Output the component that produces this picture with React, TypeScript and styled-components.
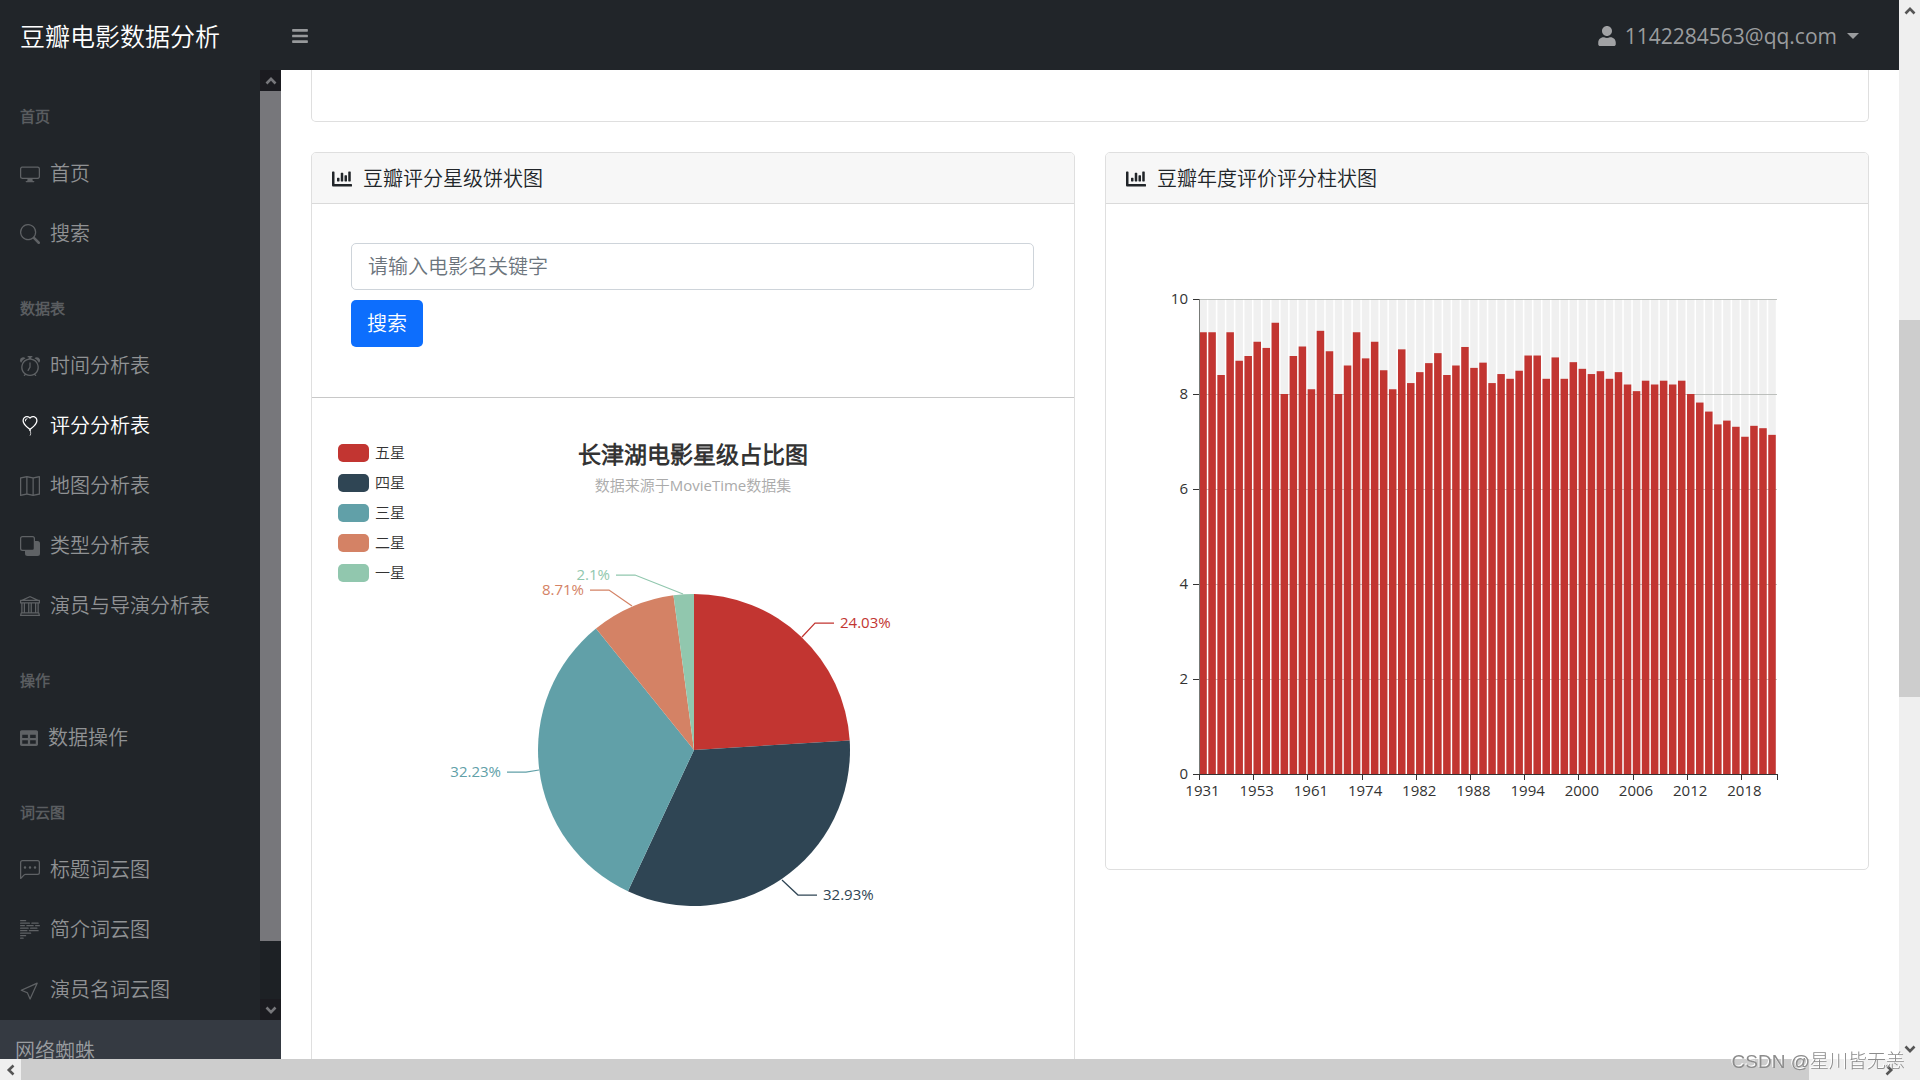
import React from "react";
import styled, { createGlobalStyle } from "styled-components";
import {
  BsAlarm,
  BsBack,
  BsBalloonHeart,
  BsBank,
  BsBodyText,
  BsChatLeftDots,
  BsCursor,
  BsDisplay,
  BsMap,
  BsSearch,
} from "react-icons/bs";
import { FaBars, FaChartBar, FaTable, FaUser } from "react-icons/fa";

const sans = `"Open Sans", "Noto Sans CJK SC DemiLight", "Noto Sans CJK SC", sans-serif`;

const GlobalStyle = createGlobalStyle`
  *, *::before, *::after { box-sizing: border-box; }
  body {
    margin: 0;
    font: 400 20px/30px ${sans};
    color: #212529;
    background: #fff;
  }
  button, input { font: inherit; }
`;

/* ---------- window frame ---------- */

const Frame = styled.div`
  display: grid;
  grid-template-columns: minmax(0, 1fr) 21px;
  grid-template-rows: minmax(0, 1fr) 21px;
  height: 100vh;
  overflow: hidden;
  background: #efefef;
`;

const Page = styled.div`
  display: flex;
  flex-direction: column;
  min-height: 0;
  overflow: hidden;
  background: #fff;
`;

const Body = styled.div`
  display: flex;
  flex: 1;
  min-height: 0;
`;

/* ---------- scroll bars ---------- */

const Bar = styled.div<{ $horizontal?: boolean; $dark?: boolean }>`
  display: flex;
  flex-direction: ${(p) => (p.$horizontal ? "row" : "column")};
  background: ${(p) => (p.$dark ? "#1d2125" : "#efefef")};
  color: ${(p) => (p.$dark ? "#77777b" : "#555")};
`;

const Arrow = styled.span<{ $turn: number; $dark?: boolean }>`
  display: flex;
  flex: 0 0 21px;
  align-items: center;
  justify-content: center;
  min-height: 21px;
  background: ${(p) => (p.$dark ? "#1b1b20" : "transparent")};

  svg {
    transform: rotate(${(p) => p.$turn}deg);
  }
`;

const Space = styled.span<{ $grow: number }>`
  flex: ${(p) => p.$grow} 1 0;
`;

const Thumb = styled(Space)<{ $dark?: boolean }>`
  background: ${(p) => (p.$dark ? "#77777b" : "#cdcdcd")};
`;

type ScrollProps = {
  before: number;
  thumb: number;
  after: number;
  horizontal?: boolean;
  dark?: boolean;
};

const Chevron = () => (
  <svg width="12" height="12" viewBox="0 0 12 12" aria-hidden="true">
    <path d="M1.5 8.5 6 3.8l4.5 4.7" fill="none" stroke="currentColor" strokeWidth="2.6" />
  </svg>
);

const ScrollBar = ({ before, thumb, after, horizontal, dark }: ScrollProps) => (
  <Bar $horizontal={horizontal} $dark={dark} aria-hidden="true">
    <Arrow $turn={horizontal ? -90 : 0} $dark={dark}>
      <Chevron />
    </Arrow>
    <Space $grow={before} />
    <Thumb $grow={thumb} $dark={dark} />
    <Space $grow={after} />
    <Arrow $turn={horizontal ? 90 : 180} $dark={dark}>
      <Chevron />
    </Arrow>
  </Bar>
);

/* ---------- top bar ---------- */

const TopBar = styled.header`
  display: flex;
  flex: 0 0 70px;
  align-items: center;
  padding: 2px 40px 0 0;
  background: #212529;
`;

const Brand = styled.a`
  width: 281px;
  padding-left: 20px;
  color: #fff;
  font-size: 25px;
  text-decoration: none;
`;

const ToggleButton = styled.button`
  display: flex;
  margin: 0 auto 0 0;
  padding: 10px;
  border: 0;
  background: none;
  color: #97999b;
  font-size: 18px;
`;

const UserButton = styled.button`
  display: flex;
  align-items: center;
  gap: 8px;
  padding: 0;
  border: 0;
  background: none;
  color: #9a9c9e;
  font-size: 21px;

  svg {
    color: #a1a2a4;
    font-size: 20px;
  }
`;

const Caret = styled.span`
  margin-left: 2px;
  border: 6px solid transparent;
  border-top-color: currentColor;
  border-bottom: 0;
`;

/* ---------- side bar ---------- */

const Sidebar = styled.aside`
  display: flex;
  flex: 0 0 281px;
  flex-direction: column;
  background: #212529;
`;

const MenuArea = styled.div`
  display: grid;
  flex: 1;
  grid-template-columns: minmax(0, 1fr) 21px;
  min-height: 0;
`;

const Menu = styled.nav`
  display: flex;
  flex-direction: column;
  overflow: hidden;
`;

const GroupTitle = styled.h2`
  margin: 0;
  padding: 35px 20px 15px;
  color: #5a5d60;
  font-size: 15px;
  font-weight: 700;
  line-height: 22px;
`;

const MenuLink = styled.a<{ $active?: boolean }>`
  display: flex;
  align-items: center;
  gap: 10px;
  padding: 17px 20px 13px;
  color: ${(p) => (p.$active ? "#fff" : "#909294")};
  text-decoration: none;
  white-space: nowrap;

  svg {
    flex: none;
    color: ${(p) => (p.$active ? "#fff" : "#5f6265")};
  }
`;

const SideFooter = styled.div`
  flex: 0 0 39px;
  padding: 16px 15px 0;
  overflow: hidden;
  background: #353a42;
  color: #9a9da0;
`;

const groups = [
  {
    title: "首页",
    items: [
      { label: "首页", icon: <BsDisplay /> },
      { label: "搜索", icon: <BsSearch /> },
    ],
  },
  {
    title: "数据表",
    items: [
      { label: "时间分析表", icon: <BsAlarm /> },
      { label: "评分分析表", icon: <BsBalloonHeart />, active: true },
      { label: "地图分析表", icon: <BsMap /> },
      { label: "类型分析表", icon: <BsBack /> },
      { label: "演员与导演分析表", icon: <BsBank /> },
    ],
  },
  { title: "操作", items: [{ label: "数据操作", icon: <FaTable size={18} /> }] },
  {
    title: "词云图",
    items: [
      { label: "标题词云图", icon: <BsChatLeftDots /> },
      { label: "简介词云图", icon: <BsBodyText /> },
      { label: "演员名词云图", icon: <BsCursor /> },
    ],
  },
] as { title: string; items: { label: string; icon: React.ReactNode; active?: boolean }[] }[];

/* ---------- content ---------- */

const Content = styled.main`
  display: flex;
  flex: 1;
  flex-direction: column;
  gap: 30px;
  min-width: 0;
  padding: 0 30px;
  overflow: hidden;
`;

const PreviousCard = styled.section`
  flex: 0 0 52px;
  border: 1px solid #dfdfdf;
  border-top: 0;
  border-radius: 0 0 5px 5px;
`;

const Row = styled.div`
  display: grid;
  grid-template-columns: repeat(2, minmax(0, 1fr));
  gap: 30px;
  align-items: start;
`;

const Card = styled.section`
  border: 1px solid #dfdfdf;
  border-radius: 5px;
  background: #fff;
`;

const CardHeader = styled.h2`
  display: flex;
  align-items: center;
  gap: 11px;
  margin: 0;
  padding: 11px 20px 9px;
  border-bottom: 1px solid #dadada;
  border-radius: 4px 4px 0 0;
  background: #f7f7f7;
  font-size: 20px;
  font-weight: 400;
`;

const SearchForm = styled.form`
  display: flex;
  flex-direction: column;
  gap: 10px;
  align-items: flex-start;
  padding: 39px 40px 50px 39px;
  border-bottom: 1px solid #c8c8c8;
`;

const SearchInput = styled.input`
  width: 100%;
  height: 47px;
  padding: 0 16px;
  border: 1px solid #ced4da;
  border-radius: 5px;
  color: #212529;

  &::placeholder {
    color: #6c757d;
    opacity: 1;
  }
`;

const SearchButton = styled.button`
  height: 47px;
  padding: 0 16px;
  border: 0;
  border-radius: 5px;
  background: #0d6efd;
  color: #fff;
`;

const Chart = styled.svg`
  display: block;
  width: 100%;
  height: auto;
  font-family: ${sans};
  font-size: 15px;
`;

/* ---------- pie chart ---------- */

const slices = [
  { name: "五星", value: 24.03, color: "#c23531", line: "490,239 503,225 522,225", x: 528, y: 230, anchor: "start" },
  { name: "四星", value: 32.93, color: "#2f4554", line: "470,482 486,497 505,497", x: 511, y: 502, anchor: "start" },
  { name: "三星", value: 32.23, color: "#61a0a8", line: "227,372 214,374 195,374", x: 189, y: 379, anchor: "end" },
  { name: "二星", value: 8.71, color: "#d48265", line: "320,208 297,192 278,192", x: 272, y: 197, anchor: "end" },
  { name: "一星", value: 2.1, color: "#91c7ae", line: "371,196 323,177 304,177", x: 298, y: 182, anchor: "end" },
] as const;

const pie = { cx: 382, cy: 352, r: 156 };

const PieChart = () => {
  const total = slices.reduce((sum, s) => sum + s.value, 0);
  const point = (share: number) => {
    const angle = (share / total) * Math.PI * 2;
    return `${pie.cx + pie.r * Math.sin(angle)} ${pie.cy - pie.r * Math.cos(angle)}`;
  };
  let start = 0;
  return (
    <Chart viewBox="0 0 762 700" role="img" aria-label="长津湖电影星级占比图">
      <text x="381" y="65" textAnchor="middle" fill="#333" fontSize="23" fontWeight="700">
        长津湖电影星级占比图
      </text>
      <text x="381" y="93" textAnchor="middle" fill="#aaa">
        数据来源于MovieTime数据集
      </text>
      {slices.map((s, i) => {
        const end = start + s.value;
        const d = `M${pie.cx} ${pie.cy}L${point(start)}A${pie.r} ${pie.r} 0 0 1 ${point(end)}Z`;
        start = end;
        return (
          <g key={s.name}>
            <rect x="26" y={46 + i * 30} width="31" height="18" rx="5" fill={s.color} />
            <text x="63" y={60 + i * 30} fill="#333">
              {s.name}
            </text>
            <path d={d} fill={s.color} />
            <polyline points={s.line} fill="none" stroke={s.color} strokeWidth="1.25" />
            <text x={s.x} y={s.y} textAnchor={s.anchor} fill={s.color}>
              {s.value}%
            </text>
          </g>
        );
      })}
    </Chart>
  );
};

/* ---------- bar chart ---------- */

const scores = [
  9.3, 9.3, 8.4, 9.3, 8.7, 8.8, 9.1, 8.97, 9.5, 8, 8.8, 9, 8.1, 9.33, 8.9, 8, 8.6, 9.3, 8.75, 9.1, 8.5, 8.1,
  8.94, 8.23, 8.46, 8.65, 8.86, 8.4, 8.6, 8.99, 8.55, 8.66, 8.23, 8.42, 8.32, 8.49, 8.81, 8.81, 8.32, 8.77,
  8.32, 8.67, 8.53, 8.42, 8.48, 8.32, 8.46, 8.2, 8.06, 8.28, 8.2, 8.28, 8.2, 8.28, 8, 7.82, 7.63, 7.36, 7.44,
  7.31, 7.1, 7.33, 7.28, 7.14,
];
const years = [1931, 1953, 1961, 1974, 1982, 1988, 1994, 2000, 2006, 2012, 2018];
const plot = { left: 93, right: 671, top: 95, bottom: 570 };
const band = (plot.right - plot.left) / scores.length;
const barWidth = 7.5;
const yOf = (v: number) => plot.bottom - ((plot.bottom - plot.top) * v) / 10;

const BarChart = () => (
  <Chart viewBox="0 0 762 665" role="img" aria-label="豆瓣年度评价评分柱状图">
    {[2, 4, 6, 8, 10].map((v) => (
      <path key={v} d={`M${plot.left} ${yOf(v) + 0.5}H${plot.right}`} stroke="#bfc2bf" />
    ))}
    {scores.map((v, i) => {
      const x = plot.left + 0.3 + i * band;
      return (
        <g key={i}>
          <rect x={x} y={plot.top} width={barWidth} height={plot.bottom - plot.top} fill="#b4b4b4" fillOpacity="0.2" />
          <rect x={x} y={yOf(v)} width={barWidth} height={plot.bottom - yOf(v)} fill="#c23531" />
        </g>
      );
    })}
    <path d={`M${plot.left + 0.5} ${plot.top}V${plot.bottom}`} stroke="#777a77" />
    <path d={`M${plot.left} ${plot.bottom + 0.5}H${plot.right}`} stroke="#333" />
    {[0, 2, 4, 6, 8, 10].map((v) => (
      <g key={v}>
        <path d={`M${plot.left - 6} ${yOf(v) + 0.5}h6`} stroke="#333" />
        <text x="82" y={yOf(v) + 5} textAnchor="end" fill="#333">
          {v}
        </text>
      </g>
    ))}
    {years.map((year, i) => (
      <g key={year}>
        <path d={`M${Math.round(plot.left + i * 6 * band) + 0.5} ${plot.bottom}v6`} stroke="#333" />
        <text x={plot.left + (i * 6 + 0.5) * band - 1} y="592" textAnchor="middle" fill="#333">
          {year}
        </text>
      </g>
    ))}
    <path d={`M${plot.right + 0.5} ${plot.bottom}v6`} stroke="#333" />
  </Chart>
);

/* ---------- watermark ---------- */

const Watermark = styled.div`
  position: fixed;
  right: 15px;
  bottom: 3px;
  color: #8c8c8c;
  font: 400 19px/30px "Liberation Sans", "Noto Sans CJK SC Light", "Noto Sans CJK SC", sans-serif;
  text-shadow: -1px -1px 0 #fff;
  white-space: nowrap;
`;

export default function App() {
  return (
    <>
      <GlobalStyle />
      <Frame>
        <Page>
          <TopBar>
            <Brand href="#">豆瓣电影数据分析</Brand>
            <ToggleButton type="button" aria-label="切换菜单">
              <FaBars />
            </ToggleButton>
            <UserButton type="button">
              <FaUser />
              <span>1142284563@qq.com</span>
              <Caret />
            </UserButton>
          </TopBar>
          <Body>
            <Sidebar>
              <MenuArea>
                <Menu>
                  {groups.map((group) => (
                    <div key={group.title}>
                      <GroupTitle>{group.title}</GroupTitle>
                      {group.items.map((item) => (
                        <MenuLink key={item.label} href="#" $active={item.active}>
                          {item.icon}
                          {item.label}
                        </MenuLink>
                      ))}
                    </div>
                  ))}
                </Menu>
                <ScrollBar before={0} thumb={850} after={58} dark />
              </MenuArea>
              <SideFooter>网络蜘蛛</SideFooter>
            </Sidebar>
            <Content>
              <PreviousCard />
              <Row>
                <Card>
                  <CardHeader>
                    <FaChartBar />
                    豆瓣评分星级饼状图
                  </CardHeader>
                  <SearchForm onSubmit={(e) => e.preventDefault()}>
                    <SearchInput type="text" aria-label="电影名关键字" placeholder="请输入电影名关键字" />
                    <SearchButton type="submit">搜索</SearchButton>
                  </SearchForm>
                  <PieChart />
                </Card>
                <Card>
                  <CardHeader>
                    <FaChartBar />
                    豆瓣年度评价评分柱状图
                  </CardHeader>
                  <BarChart />
                </Card>
              </Row>
            </Content>
          </Body>
        </Page>
        <ScrollBar before={299} thumb={377} after={341} />
        <ScrollBar before={0} thumb={1788} after={69} horizontal />
      </Frame>
      <Watermark>CSDN @星川皆无恙</Watermark>
    </>
  );
}
